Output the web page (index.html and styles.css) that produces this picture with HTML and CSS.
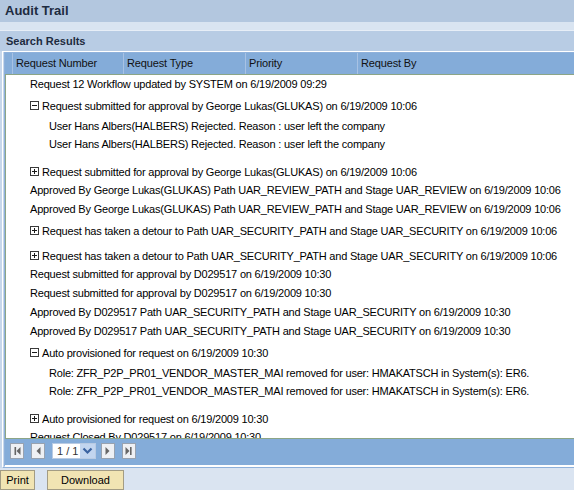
FILE: index.html
```html
<!DOCTYPE html>
<html>
<head>
<meta charset="utf-8">
<title>Audit Trail</title>
<link rel="stylesheet" href="styles.css">
</head>
<body>
<div class="title-bar">Audit Trail</div>
<div class="strip"></div>
<div class="search-bar">Search Results</div>
<div class="frame">
  <div class="outer">
    <div class="inner">
      <div class="thead">
        <div class="th sel"></div>
        <div class="th c1">Request Number</div>
        <div class="th c2">Request Type</div>
        <div class="th c3">Priority</div>
        <div class="th c4">Request By</div>
      </div>
      <div class="tbody">
        <div class="row">Request 12 Workflow updated by SYSTEM on 6/19/2009 09:29</div>
        <div class="node expanded">
          <div class="node-head"><svg class="tog" width="9" height="9" viewBox="0 0 9 9"><rect x="0.5" y="0.5" width="8" height="8" fill="#fff" stroke="#3a3a3a"/><path d="M2 4.5h5" stroke="#1a1a1a"/></svg><span>Request submitted for approval by George Lukas(GLUKAS) on 6/19/2009 10:06</span></div>
          <div class="children">
            <div class="child">User Hans Albers(HALBERS) Rejected. Reason : user left the company</div>
            <div class="child">User Hans Albers(HALBERS) Rejected. Reason : user left the company</div>
          </div>
        </div>
        <div class="node collapsed">
          <div class="node-head"><svg class="tog" width="9" height="9" viewBox="0 0 9 9"><rect x="0.5" y="0.5" width="8" height="8" fill="#fff" stroke="#3a3a3a"/><path d="M2 4.5h5M4.5 2v5" stroke="#1a1a1a"/></svg><span>Request submitted for approval by George Lukas(GLUKAS) on 6/19/2009 10:06</span></div>
        </div>
        <div class="row">Approved By George Lukas(GLUKAS) Path UAR_REVIEW_PATH and Stage UAR_REVIEW on 6/19/2009 10:06</div>
        <div class="row">Approved By George Lukas(GLUKAS) Path UAR_REVIEW_PATH and Stage UAR_REVIEW on 6/19/2009 10:06</div>
        <div class="node collapsed">
          <div class="node-head"><svg class="tog" width="9" height="9" viewBox="0 0 9 9"><rect x="0.5" y="0.5" width="8" height="8" fill="#fff" stroke="#3a3a3a"/><path d="M2 4.5h5M4.5 2v5" stroke="#1a1a1a"/></svg><span>Request has taken a detour to Path UAR_SECURITY_PATH and Stage UAR_SECURITY on 6/19/2009 10:06</span></div>
        </div>
        <div class="node collapsed">
          <div class="node-head"><svg class="tog" width="9" height="9" viewBox="0 0 9 9"><rect x="0.5" y="0.5" width="8" height="8" fill="#fff" stroke="#3a3a3a"/><path d="M2 4.5h5M4.5 2v5" stroke="#1a1a1a"/></svg><span>Request has taken a detour to Path UAR_SECURITY_PATH and Stage UAR_SECURITY on 6/19/2009 10:06</span></div>
        </div>
        <div class="row">Request submitted for approval by D029517 on 6/19/2009 10:30</div>
        <div class="row">Request submitted for approval by D029517 on 6/19/2009 10:30</div>
        <div class="row">Approved By D029517 Path UAR_SECURITY_PATH and Stage UAR_SECURITY on 6/19/2009 10:30</div>
        <div class="row">Approved By D029517 Path UAR_SECURITY_PATH and Stage UAR_SECURITY on 6/19/2009 10:30</div>
        <div class="node expanded">
          <div class="node-head"><svg class="tog" width="9" height="9" viewBox="0 0 9 9"><rect x="0.5" y="0.5" width="8" height="8" fill="#fff" stroke="#3a3a3a"/><path d="M2 4.5h5" stroke="#1a1a1a"/></svg><span>Auto provisioned for request on 6/19/2009 10:30</span></div>
          <div class="children">
            <div class="child">Role: ZFR_P2P_PR01_VENDOR_MASTER_MAI removed for user: HMAKATSCH in System(s): ER6.</div>
            <div class="child">Role: ZFR_P2P_PR01_VENDOR_MASTER_MAI removed for user: HMAKATSCH in System(s): ER6.</div>
          </div>
        </div>
        <div class="node collapsed">
          <div class="node-head"><svg class="tog" width="9" height="9" viewBox="0 0 9 9"><rect x="0.5" y="0.5" width="8" height="8" fill="#fff" stroke="#3a3a3a"/><path d="M2 4.5h5M4.5 2v5" stroke="#1a1a1a"/></svg><span>Auto provisioned for request on 6/19/2009 10:30</span></div>
        </div>
        <div class="row">Request Closed By D029517 on 6/19/2009 10:30</div>
      </div>
      <div class="pager">
        <div class="pbtn"><svg width="12" height="14" viewBox="0 0 12 14"><rect x="3.5" y="3" width="1.6" height="8" fill="#666"/><path d="M9.5 3V11L5.5 7Z" fill="#666"/></svg></div>
        <div class="pbtn"><svg width="12" height="14" viewBox="0 0 12 14"><path d="M8.5 3V11L4.5 7Z" fill="#666"/></svg></div>
        <div class="page-box"><span class="page-text">1 / 1</span><span class="dd"><svg width="11" height="8" viewBox="0 0 11 8"><path d="M1.5 1.5L5.5 5.5L9.5 1.5" fill="none" stroke="#3a62a0" stroke-width="2.2"/></svg></span></div>
        <div class="pbtn"><svg width="12" height="14" viewBox="0 0 12 14"><path d="M3.5 3V11L7.5 7Z" fill="#666"/></svg></div>
        <div class="pbtn"><svg width="12" height="14" viewBox="0 0 12 14"><path d="M2.5 3V11L6.5 7Z" fill="#666"/><rect x="7" y="3" width="1.6" height="8" fill="#666"/></svg></div>
      </div>
    </div>
  </div>
</div>
<div class="actions">
  <button class="btn print">Print</button>
  <button class="btn download">Download</button>
</div>
</body>
</html>
```
FILE: styles.css
```css
html, body {
  margin: 0;
  padding: 0;
}
body {
  width: 574px;
  height: 490px;
  overflow: hidden;
  background: #dae4f1;
  font-family: "Liberation Sans", Arial, sans-serif;
  font-size: 11px;
  color: #000;
}
.title-bar {
  height: 22px;
  line-height: 22px;
  background: #b3c7df;
  font-weight: bold;
  font-size: 13px;
  padding-left: 5px;
  color: #1d2b40;
}
.strip {
  height: 8px;
  background: #d9e4f1;
  border-bottom: 1px solid #e7eef7;
}
.search-bar {
  height: 20px;
  line-height: 20px;
  background: #b8cce4;
  font-weight: bold;
  font-size: 11px;
  padding-left: 6px;
  color: #1d2b40;
}
.frame {
  background: #c7d7eb;
  padding-left: 2px;
}
.outer {
  border-top: 1px solid #fff;
  border-left: 1px solid #fff;
  border-bottom: 1px solid #8fb1db;
  padding-left: 1px;
}
.inner {
  border-top: 1px solid #8fb1db;
  border-left: 1px solid #8fb1db;
  border-bottom: 1px solid #fff;
  padding-bottom: 1px;
  background: #fff;
}
.thead {
  display: flex;
  height: 22px;
  box-sizing: border-box;
  background: #84acd9;
  border-bottom: 1px solid #8ca586;
}
.th {
  box-sizing: border-box;
  height: 21px;
  line-height: 21px;
  border-right: 1px solid #a8c2e4;
  padding-left: 3px;
  color: #111;
  white-space: nowrap;
  letter-spacing: -0.15px;
}
.th.sel { width: 8px; padding-left: 0; }
.th.c1 { width: 111px; }
.th.c2 { width: 122px; }
.th.c3 { width: 112px; }
.th.c4 { flex: 1; border-right: none; }
.tbody {
  height: 363px;
  overflow: hidden;
  border-left: 1px solid #8ca586;
  background: #fff;
  letter-spacing: -0.2px;
}
.row {
  height: 19px;
  line-height: 19px;
  padding-left: 24px;
  white-space: nowrap;
}
.node {
  margin-top: 2px;
}
.node.collapsed + .node {
  margin-top: 6px;
}
.node-head {
  display: flex;
  align-items: center;
  height: 19px;
  padding-left: 24px;
  white-space: nowrap;
}
.tog {
  display: block;
  margin-right: 3px;
  flex: none;
}
.children {
  padding: 2px 0 7px 43px;
}
.child {
  height: 18px;
  line-height: 18px;
  white-space: nowrap;
}
.pager {
  display: flex;
  align-items: flex-start;
  box-sizing: border-box;
  height: 27px;
  padding: 4px 0 0 5px;
  background: #84acd9;
  border-top: 1px solid #8ca586;
}
.pbtn {
  box-sizing: border-box;
  width: 14px;
  height: 16px;
  margin-right: 7px;
  border: 1px solid #98a2b0;
  background: #eef0f4;
}
.pbtn svg {
  display: block;
}
.page-box {
  display: flex;
  box-sizing: border-box;
  width: 44px;
  height: 16px;
  margin-right: 5px;
  background: #fff;
  border: 1px solid #b9cbe3;
}
.page-text {
  flex: 1;
  line-height: 14px;
  padding-left: 4px;
  color: #333;
}
.dd {
  display: flex;
  align-items: center;
  justify-content: center;
  width: 15px;
  background: #c2d5ef;
}
.dd svg {
  display: block;
}
.actions {
  display: flex;
  padding-top: 2px;
}
.btn {
  box-sizing: border-box;
  height: 20px;
  margin: 0;
  padding: 0;
  border: 1px solid #a39c84;
  background: #f1e4b3;
  font-family: "Liberation Sans", Arial, sans-serif;
  font-size: 11px;
  color: #000;
}
.btn.print { width: 35px; }
.btn.download { width: 77px; margin-left: 12px; }
```
